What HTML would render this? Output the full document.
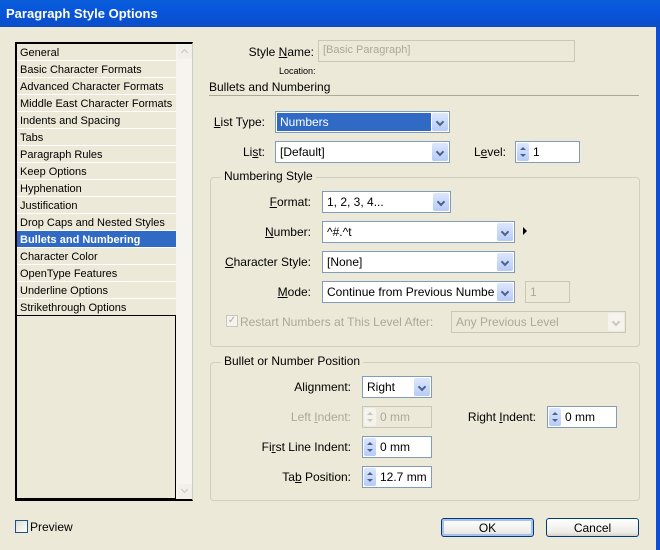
<!DOCTYPE html><html><head><style>
*{box-sizing:border-box;margin:0;padding:0}
body{width:660px;height:550px;background:#ece9d8;font-family:"Liberation Sans",sans-serif;font-size:12px;color:#000;position:relative;overflow:hidden}
.a{position:absolute;white-space:nowrap}
.title{left:0;top:0;width:660px;height:27px;background:linear-gradient(#0a5ed8,#0855dd 40%,#0a4ec8);color:#fff;font-weight:bold;font-size:13px;padding:6px 0 0 6px}
.bl{position:absolute;top:27px;width:4px;height:523px;background:#0b4fd6}
.lbl{text-align:right}
.box{position:absolute;background:#fff;border:1px solid #7f9db9;padding:3px 0 0 4px;font-size:12px}
.dis{background:#ece9d8;color:#aca899;border-color:#c9c7ba}
.arr{position:absolute;right:1px;top:1px;bottom:1px;width:16px;background:linear-gradient(#dce7fd,#b7cbf7);border-radius:2px}
.arr:after{content:"";position:absolute;left:5px;top:6px;width:4px;height:4px;border-right:2px solid #4d6185;border-bottom:2px solid #4d6185;transform:rotate(45deg)}
.dis .arr{background:#f4f3ee}.dis .arr:after{border-color:#c9c7ba}
.sp{position:absolute;left:1px;top:1px;bottom:1px;width:12px;background:linear-gradient(#dce7fd,#b7cbf7);border-radius:2px}
.sp:before{content:"";position:absolute;left:3px;top:4px;border:3px solid transparent;border-bottom:3px solid #4d6185;border-top:0}
.sp:after{content:"";position:absolute;left:3px;bottom:4px;border:3px solid transparent;border-top:3px solid #4d6185;border-bottom:0}
.dis .sp{background:#f4f3ee}.dis .sp:before{border-bottom-color:#c9c7ba}.dis .sp:after{border-top-color:#c9c7ba}
.sb{padding-left:17px}
.grp{position:absolute;border:1px solid #d0d0bf;border-radius:4px}
.leg{position:absolute;background:#ece9d8;padding:0 3px}
.list{position:absolute;left:15px;top:42px;width:178px;height:459px;border:2px solid #000;border-right:1px solid #ccc;background:#ece9d8}
.it{height:17px;font-size:11px;padding:3px 0 0 3px;border-bottom:1px solid #fff;width:159px}
.sel{background:#316ac5;color:#fff;font-weight:bold}
.btn{position:absolute;border:1px solid #003c74;border-radius:3px;background:linear-gradient(#fff,#ecebe6 80%,#d6d0c5);text-align:center;padding-top:2px}
.sa{position:absolute;left:161px;width:14px;height:14px;background:#f0efe9;border-radius:2px}
.sa:after{content:"";position:absolute;left:4px;width:4px;height:4px;border-left:1px solid #c5c4bd;border-top:1px solid #c5c4bd}
u{text-decoration:underline}
</style></head><body>
<div class="a title">Paragraph Style Options</div>
<div class="bl" style="left:656px"></div>

<div class="list">
<div class="it">General</div><div class="it">Basic Character Formats</div><div class="it">Advanced Character Formats</div><div class="it">Middle East Character Formats</div><div class="it">Indents and Spacing</div><div class="it">Tabs</div><div class="it">Paragraph Rules</div><div class="it">Keep Options</div><div class="it">Hyphenation</div><div class="it">Justification</div><div class="it">Drop Caps and Nested Styles</div><div class="it sel">Bullets and Numbering</div><div class="it">Character Color</div><div class="it">OpenType Features</div><div class="it">Underline Options</div><div class="it">Strikethrough Options</div>
<div style="position:absolute;left:0;top:271px;width:159px;height:184px;border:1px solid #000;border-left:0"></div>
<div style="position:absolute;left:159px;top:0;width:16px;height:455px;background:#f5f4ee"></div>
<div class="sa" style="top:1px"><style>.sa:first-child{}</style></div>
<div class="sa" style="top:440px"></div>
</div>
<style>.list .sa:nth-last-child(2):after{top:5px;transform:rotate(45deg)}.list .sa:last-child:after{top:3px;transform:rotate(225deg)}</style>

<div class="a lbl" style="left:200px;top:45px;width:114px">Style <u>N</u>ame:</div>
<div class="box dis" style="left:318px;top:40px;width:257px;height:22px;font-size:11px">[Basic Paragraph]</div>
<div class="a" style="left:279px;top:66px;font-size:9px">Location:</div>
<div class="a" style="left:209px;top:80px">Bullets and Numbering</div>
<div class="a" style="left:209px;top:95px;width:430px;height:1px;background:#aca899"></div>

<div class="a lbl" style="left:200px;top:115px;width:65px"><u>L</u>ist Type:</div>
<div class="box" style="left:275px;top:111px;width:175px;height:22px;padding:1px"><div style="background:#316ac5;color:#fff;height:18px;width:154px;padding:2px 3px">Numbers</div><div class="arr"></div></div>
<div class="a lbl" style="left:200px;top:145px;width:65px">Li<u>s</u>t:</div>
<div class="box" style="left:275px;top:141px;width:175px;height:22px">[Default]<div class="arr"></div></div>
<div class="a lbl" style="left:460px;top:145px;width:46px">L<u>e</u>vel:</div>
<div class="box sb" style="left:515px;top:141px;width:65px;height:22px">1<div class="sp"></div></div>

<div class="grp" style="left:210px;top:177px;width:430px;height:170px"></div>
<div class="a leg" style="left:221px;top:169px">Numbering Style</div>
<div class="a lbl" style="left:230px;top:195px;width:81px"><u>F</u>ormat:</div>
<div class="box" style="left:322px;top:191px;width:129px;height:22px">1, 2, 3, 4...<div class="arr"></div></div>
<div class="a lbl" style="left:230px;top:225px;width:81px"><u>N</u>umber:</div>
<div class="box" style="left:322px;top:221px;width:193px;height:22px">^#.^t<div class="arr"></div></div>
<div class="a" style="left:523px;top:227px;border:4px solid transparent;border-left:4px solid #000;border-right:0;width:0;height:0"></div>
<div class="a lbl" style="left:210px;top:255px;width:101px"><u>C</u>haracter Style:</div>
<div class="box" style="left:322px;top:251px;width:193px;height:22px">[None]<div class="arr"></div></div>
<div class="a lbl" style="left:230px;top:285px;width:81px"><u>M</u>ode:</div>
<div class="box" style="left:322px;top:281px;width:193px;height:22px;overflow:hidden">Continue from Previous Numbe<div class="arr"></div></div>
<div class="box dis" style="left:525px;top:281px;width:45px;height:22px">1</div>
<div class="a" style="left:226px;top:315px;width:12px;height:12px;border:1px solid #c9c7ba;background:#f4f3ee;color:#aca899;font-size:10px;line-height:10px;text-align:center">✓</div>
<div class="a" style="left:240px;top:315px;color:#aca899">Restart Numbers at This Level After:</div>
<div class="box dis" style="left:451px;top:311px;width:175px;height:22px">Any Previous Level<div class="arr"></div></div>

<div class="grp" style="left:210px;top:362px;width:430px;height:139px"></div>
<div class="a leg" style="left:221px;top:354px">Bullet or Number Position</div>
<div class="a lbl" style="left:240px;top:380px;width:111px">Ali<u>g</u>nment:</div>
<div class="box" style="left:362px;top:376px;width:70px;height:22px">Right<div class="arr"></div></div>
<div class="a lbl" style="left:240px;top:410px;width:111px;color:#aca899">Left <u>I</u>ndent:</div>
<div class="box dis sb" style="left:362px;top:406px;width:70px;height:22px">0 mm<div class="sp"></div></div>
<div class="a lbl" style="left:440px;top:410px;width:96px">Right <u>I</u>ndent:</div>
<div class="box sb" style="left:547px;top:406px;width:70px;height:22px">0 mm<div class="sp"></div></div>
<div class="a lbl" style="left:230px;top:440px;width:121px">Fi<u>r</u>st Line Indent:</div>
<div class="box sb" style="left:362px;top:436px;width:70px;height:22px">0 mm<div class="sp"></div></div>
<div class="a lbl" style="left:240px;top:470px;width:111px">Ta<u>b</u> Position:</div>
<div class="box sb" style="left:362px;top:466px;width:70px;height:22px">12.7 mm<div class="sp"></div></div>

<div class="a" style="left:15px;top:520px;width:13px;height:13px;border:1px solid #1c5180;background:linear-gradient(135deg,#dcdcd6,#fff)"></div>
<div class="a" style="left:30px;top:520px">Preview</div>
<div class="btn" style="left:441px;top:518px;width:93px;height:19px;box-shadow:inset 0 0 0 2px #a8c0f0">OK</div>
<div class="btn" style="left:546px;top:518px;width:93px;height:19px">Cancel</div>
</body></html>
